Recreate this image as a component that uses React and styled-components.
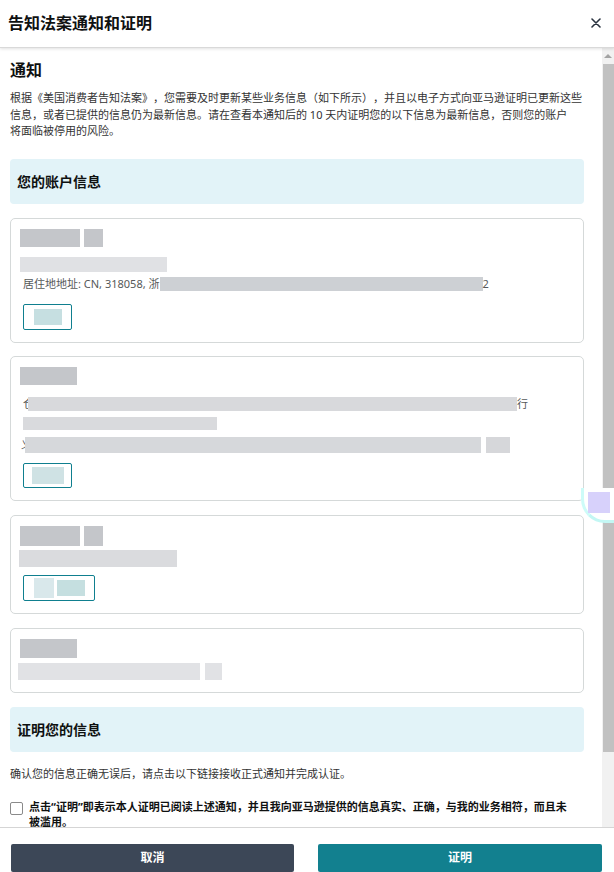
import React from 'react';
import styled, { createGlobalStyle } from 'styled-components';

const GlobalStyle = createGlobalStyle`
  html, body {
    margin: 0;
    padding: 0;
    background: #fff;
    overflow: hidden;
  }
  body {
    font-family: "Noto Sans", "Noto Sans CJK SC", sans-serif;
    color: #333;
    text-spacing-trim: space-all;
  }
  * { box-sizing: border-box; }
`;

const Modal = styled.div`
  position: relative;
  width: 614px;
  height: 872px;
  display: flex;
  flex-direction: column;
  background: #fff;
  overflow: hidden;
`;

const Header = styled.div`
  height: 48px;
  flex: 0 0 48px;
  display: flex;
  align-items: center;
  justify-content: space-between;
  padding: 0 10px 1px 8px;
  border-bottom: 1px solid #d9d9d9;
  box-shadow: 0 1px 3px rgba(0, 0, 0, 0.12);
  position: relative;
  z-index: 1;
`;

const Title = styled.h1`
  margin: 0;
  font-size: 16px;
  font-weight: 700;
  color: #0f1111;
  line-height: 22px;
`;

const CloseButton = styled.button`
  width: 16px;
  height: 16px;
  padding: 0;
  border: 0;
  background: none;
  display: flex;
  align-items: center;
  justify-content: center;
  cursor: pointer;
`;

const Body = styled.div`
  flex: 1;
  min-height: 0;
  display: flex;
`;

const Content = styled.div`
  flex: 1;
  min-width: 0;
  overflow: hidden;
  padding: 11px 18px 0 10px;
`;

const ScrollTrack = styled.div`
  width: 12px;
  flex: 0 0 12px;
  background: #f1f1f1;
  display: flex;
  flex-direction: column;
  align-items: flex-end;
`;

const ScrollArrow = styled.div`
  width: 12px;
  height: 16px;
  display: flex;
  align-items: center;
  justify-content: center;
  &::after {
    content: '';
    border-left: 4px solid transparent;
    border-right: 4px solid transparent;
    border-bottom: 4px solid #a3a3a3;
  }
`;

const ScrollThumb = styled.div`
  width: 11px;
  height: 688px;
  background: #c1c1c1;
`;

const Heading = styled.h2`
  margin: 0;
  font-size: 16px;
  font-weight: 700;
  line-height: 22px;
  color: #0f1111;
`;

const Paragraph = styled.p`
  margin: ${p => p.$mt || 0}px 0 0 0;
  font-size: 11px;
  line-height: 16.5px;
  color: #333;
`;

const SectionBox = styled.div`
  margin-top: ${p => p.$mt}px;
  height: 45px;
  display: flex;
  align-items: center;
  padding-left: 7px;
  background: #e2f3f8;
  border-radius: 4px;
  font-size: 14px;
  font-weight: 700;
  color: #0f1111;
`;

const Card = styled.div`
  margin-top: ${p => p.$mt ?? 14}px;
  border: 1px solid #d5d9d9;
  border-radius: 5px;
  padding: 10px 9px 12px 9px;
  display: flex;
  flex-direction: column;
  align-items: flex-start;
`;

const Row = styled.div`
  display: flex;
  align-items: center;
  gap: ${p => p.$gap ?? 4}px;
  margin-top: ${p => p.$mt || 0}px;
  margin-left: ${p => p.$ml || 0}px;
  font-size: 11px;
  line-height: 14px;
  color: #565959;
  white-space: nowrap;
`;

const Blur = styled.span`
  display: inline-block;
  width: ${p => p.$w}px;
  height: ${p => p.$h}px;
  background: ${p => p.$c};
  flex: 0 0 auto;
`;

const Clip = styled.span`
  display: inline-block;
  width: ${p => p.$w}px;
  overflow: hidden;
`;

const EditButton = styled.div`
  margin-top: ${p => p.$mt}px;
  margin-left: 3px;
  width: ${p => p.$w}px;
  height: ${p => p.$h}px;
  border: 1px solid #0f7f8f;
  border-radius: 2px;
  display: flex;
  align-items: center;
  justify-content: center;
  gap: 3px;
`;

const CheckRow = styled.label`
  margin-top: 18px;
  display: flex;
  align-items: flex-start;
  gap: 6px;
`;

const CheckBox = styled.span`
  width: 13px;
  height: 13px;
  flex: 0 0 13px;
  margin-top: 2px;
  border: 1px solid #8a8a8a;
  border-radius: 2px;
  background: #fff;
`;

const CheckText = styled.span`
  font-size: 11px;
  line-height: 14.5px;
  font-weight: 700;
  color: #0f1111;
`;

const Footer = styled.div`
  flex: 0 0 43px;
  border-top: 1px solid #d5d5d5;
  padding: 16px 12px 0 11px;
  display: grid;
  grid-template-columns: 283px 284px;
  justify-content: space-between;
`;

const FooterButton = styled.button`
  height: 28px;
  border: 0;
  border-radius: 2px;
  background: ${p => (p.$primary ? '#12808f' : '#3c4757')};
  color: #fff;
  font-family: inherit;
  font-size: 12px;
  font-weight: 700;
  padding: 0 0 2px 0;
  cursor: pointer;
`;

const Widget = styled.div`
  position: absolute;
  left: 581px;
  top: 488px;
  width: 33px;
  height: 35px;
  background: #fff;
  border-left: 3px solid #cdfbf8;
  border-bottom: 3px solid #c3f7f4;
  border-bottom-left-radius: 24px;
  padding: 4px 0 0 4px;
  z-index: 2;
`;

const WidgetSquare = styled.div`
  width: 22px;
  height: 21px;
  background: #d7d1fb;
`;

const TITLE = '#c4c6ca';
const LIGHT = '#e0e1e4';

export default function App() {
  return (
    <>
      <GlobalStyle />
      <Modal>
        <Header>
          <Title>告知法案通知和证明</Title>
          <CloseButton aria-label="关闭">
            <svg width="10" height="10" viewBox="0 0 10 10">
              <path d="M1 1 L9 9 M9 1 L1 9" stroke="#2a3340" strokeWidth="1.6" strokeLinecap="round" />
            </svg>
          </CloseButton>
        </Header>

        <Body>
          <Content>
            <Heading>通知</Heading>
            <Paragraph $mt={9}>
              根据《美国消费者告知法案》，您需要及时更新某些业务信息（如下所示），并且以电子方式向亚马逊证明已更新这些<br />
              信息，或者已提供的信息仍为最新信息。请在查看本通知后的 10 天内证明您的以下信息为最新信息，否则您的账户<br />
              将面临被停用的风险。
            </Paragraph>

            <SectionBox $mt={19}>您的账户信息</SectionBox>

            <Card>
              <Row>
                <Blur $w={60} $h={18} $c={TITLE} />
                <Blur $w={19} $h={18} $c={TITLE} />
              </Row>
              <Row $mt={10}>
                <Blur $w={147} $h={15} $c={LIGHT} />
              </Row>
              <Row $mt={5} $ml={3} $gap={0}>
                居住地地址: CN, 318058, 浙
                <Blur $w={323} $h={14} $c="#cdd0d4" />
                2
              </Row>
              <EditButton $mt={13} $w={49} $h={26}>
                <Blur $w={28} $h={16} $c="#c6dfe1" />
              </EditButton>
            </Card>

            <Card $mt={13}>
              <Row>
                <Blur $w={57} $h={18} $c={TITLE} />
              </Row>
              <Row $mt={12} $ml={3} $gap={0}>
                <Clip $w={5}>仓</Clip>
                <Blur $w={489} $h={14} $c="#d8d9dc" />
                行
              </Row>
              <Row $mt={6} $ml={3}>
                <Blur $w={194} $h={13} $c="#d9dadd" />
              </Row>
              <Row $mt={7} $ml={1} $gap={0}>
                <Clip $w={4}>义</Clip>
                <Blur $w={456} $h={16} $c="#d6d8db" />
                <Blur $w={5} $h={16} $c="#fff" />
                <Blur $w={24} $h={16} $c="#d6d7da" />
              </Row>
              <EditButton $mt={10} $w={49} $h={25}>
                <Blur $w={32} $h={17} $c="#cfe2e4" />
              </EditButton>
            </Card>

            <Card>
              <Row>
                <Blur $w={60} $h={20} $c={TITLE} />
                <Blur $w={19} $h={20} $c={TITLE} />
              </Row>
              <Row $mt={4} $ml={-1}>
                <Blur $w={158} $h={17} $c="#dadbde" />
              </Row>
              <EditButton $mt={8} $w={72} $h={26}>
                <Blur $w={20} $h={20} $c="#d9e8eb" />
                <Blur $w={28} $h={16} $c="#c5dfe0" />
              </EditButton>
            </Card>

            <Card>
              <Row>
                <Blur $w={57} $h={19} $c={TITLE} />
              </Row>
              <Row $mt={5} $ml={-2} $gap={5}>
                <Blur $w={182} $h={17} $c="#e1e2e5" />
                <Blur $w={17} $h={17} $c="#e1e2e5" />
              </Row>
            </Card>

            <SectionBox $mt={14}>证明您的信息</SectionBox>

            <Paragraph $mt={14}>确认您的信息正确无误后，请点击以下链接接收正式通知并完成认证。</Paragraph>

            <CheckRow>
              <CheckBox />
              <CheckText>
                点击“证明”即表示本人证明已阅读上述通知，并且我向亚马逊提供的信息真实、正确，与我的业务相符，而且未<br />
                被滥用。
              </CheckText>
            </CheckRow>
          </Content>
          <ScrollTrack>
            <ScrollArrow />
            <ScrollThumb />
          </ScrollTrack>
        </Body>

        <Footer>
          <FooterButton>取消</FooterButton>
          <FooterButton $primary>证明</FooterButton>
        </Footer>

        <Widget>
          <WidgetSquare />
        </Widget>
      </Modal>
    </>
  );
}
